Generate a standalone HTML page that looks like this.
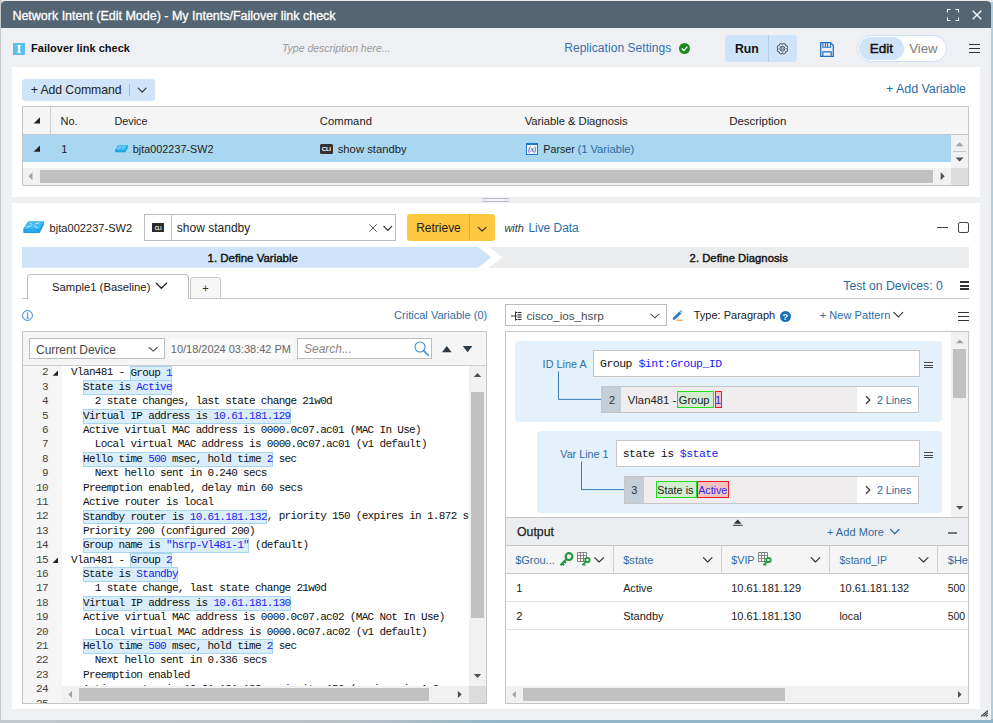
<!DOCTYPE html>
<html>
<head>
<meta charset="utf-8">
<title>Network Intent</title>
<style>
*{box-sizing:border-box;margin:0;padding:0}
html,body{width:993px;height:723px;overflow:hidden}
body{font-family:"Liberation Sans",sans-serif;font-size:12px;color:#222;background:#a9cfe1;position:relative}
.a{position:absolute}
.t{position:absolute;white-space:nowrap;line-height:14px;height:14px}
.b{color:#2e6da4}
.mono{font-family:"Liberation Mono",monospace}
svg{position:absolute;overflow:visible}
#bgtop{position:absolute;left:0;top:0;width:993px;height:2px;background:#e9ebee}
#bgleft{position:absolute;left:0;top:0;width:2px;height:723px;background:#c4c8cb}
#win{position:absolute;left:1px;top:1px;width:990px;height:719px;background:#eff0f4;border-radius:4px 4px 0 0;overflow:hidden}
#title{position:absolute;left:0;top:0;width:990px;height:27px;background:#546673}
.panel{position:absolute;background:#fff}
</style>
</head>
<body>
<div id="bgtop"></div><div id="bgleft"></div>
<div class="a" style="left:0;top:719px;width:993px;height:4px;background:linear-gradient(90deg,#c3c8cc 0%,#b9c1c6 35%,#93b6c7 50%,#8fb5c8 100%)"></div>
<div id="win"><div class="a" style="left:-1px;top:-1px;width:993px;height:723px">
<div class="a" style="left:1px;top:1px;width:990px;height:27px;background:#546673;border-radius:4px 4px 0 0"></div><div class="t" style="left:12.40px;top:8.70px;font-size:12.5px;color:#fff;letter-spacing:-0.009px;-webkit-text-stroke:0.3px #fff;">Network Intent (Edit Mode) - My Intents/Failover link check</div><svg style="left:947px;top:9px" width="12" height="12" viewBox="0 0 12 12"><path d="M0.5 3.5V0.5H3.5 M8.5 0.5H11.5V3.5 M11.5 8.5V11.5H8.5 M3.5 11.5H0.5V8.5" fill="none" stroke="#fff" stroke-width="1.1"/></svg><svg style="left:972px;top:10px" width="10" height="10" viewBox="0 0 10 10"><path d="M0.7 0.7L9.3 9.3M9.3 0.7L0.7 9.3" fill="none" stroke="#fff" stroke-width="1.3"/></svg><div class="a" style="left:13px;top:42.7px;width:12px;height:12.1px;background:#5bc0f0"></div><div class="t" style="left:13px;top:41.6px;width:12px;text-align:center;font-family:'Liberation Serif',serif;font-weight:bold;font-size:12.5px;color:#fff">I</div><div class="t" style="left:31.00px;top:41.00px;font-size:11px;color:#111;letter-spacing:0.030px;font-weight:bold;">Failover link check</div><div class="t" style="left:282.00px;top:41.00px;font-size:10.5px;color:#999;letter-spacing:-0.019px;font-style:italic;">Type description here...</div><div class="t" style="left:564.20px;top:41.40px;font-size:12px;color:#3572ad;letter-spacing:0.052px;">Replication Settings</div><svg style="left:679px;top:43px" width="11" height="11" viewBox="0 0 11 11"><circle cx="5.5" cy="5.5" r="5.5" fill="#1e8a1e"/><path d="M2.8 5.6L4.8 7.6L8.3 3.8" fill="none" stroke="#fff" stroke-width="1.4"/></svg><div class="a" style="left:725px;top:35.3px;width:71.6px;height:26.4px;background:#cfe4f8;border-radius:3px"></div><div class="a" style="left:767.5px;top:35.3px;width:1px;height:26.4px;background:#b4cbe2"></div><div class="t" style="left:735.00px;top:41.80px;font-size:12.25px;color:#111;letter-spacing:-0.071px;font-weight:bold;">Run</div><svg style="left:0;top:0" width="1" height="1"><circle cx="785.86" cy="50.14" r="1.75" fill="#cfe4f8" stroke="#4a4a4a" stroke-width="0.9"/><circle cx="783.84" cy="52.16" r="1.75" fill="#cfe4f8" stroke="#4a4a4a" stroke-width="0.9"/><circle cx="780.96" cy="52.16" r="1.75" fill="#cfe4f8" stroke="#4a4a4a" stroke-width="0.9"/><circle cx="778.94" cy="50.14" r="1.75" fill="#cfe4f8" stroke="#4a4a4a" stroke-width="0.9"/><circle cx="778.94" cy="47.26" r="1.75" fill="#cfe4f8" stroke="#4a4a4a" stroke-width="0.9"/><circle cx="780.96" cy="45.24" r="1.75" fill="#cfe4f8" stroke="#4a4a4a" stroke-width="0.9"/><circle cx="783.84" cy="45.24" r="1.75" fill="#cfe4f8" stroke="#4a4a4a" stroke-width="0.9"/><circle cx="785.86" cy="47.26" r="1.75" fill="#cfe4f8" stroke="#4a4a4a" stroke-width="0.9"/><circle cx="782.40" cy="48.70" r="3.9" fill="#cfe4f8"/><circle cx="782.40" cy="48.70" r="2.5" fill="none" stroke="#4a4a4a" stroke-width="0.9"/><rect x="781.50" y="47.80" width="1.8" height="1.8" fill="none" stroke="#4a4a4a" stroke-width="0.6"/></svg><svg style="left:820px;top:42px" width="14" height="15" viewBox="0 0 14 15"><path d="M0.7 0.7H10.6L13.3 3.4V14.3H0.7Z" fill="none" stroke="#1f72c4" stroke-width="1.3"/><path d="M2.9 0.7V5.2H10.6V0.7M5.4 0.7V5.2M7.6 0.7V5.2" fill="none" stroke="#1f72c4" stroke-width="1.1"/><path d="M2.9 14.3V9.8H11.2V14.3" fill="none" stroke="#1f72c4" stroke-width="1.2"/></svg><div class="a" style="left:857.3px;top:35px;width:89.7px;height:26.5px;background:#fff;border:1px solid #c9e0f6;border-radius:13.5px"></div><div class="a" style="left:858.8px;top:36.5px;width:45px;height:23.5px;background:#cfe4f8;border-radius:12px"></div><div class="t" style="left:869.70px;top:42.00px;font-size:13.5px;color:#111;letter-spacing:-0.016px;-webkit-text-stroke:0.45px #111;">Edit</div><div class="t" style="left:909.20px;top:42.00px;font-size:13.25px;color:#7d7d7d;">View</div><div class="a" style="left:969px;top:44.2px;width:11.3px;height:1.1px;background:#333"></div><div class="a" style="left:969px;top:48.2px;width:11.3px;height:1.1px;background:#333"></div><div class="a" style="left:969px;top:52.2px;width:11.3px;height:1.1px;background:#333"></div><div class="a" style="left:12px;top:67px;width:968px;height:130px;background:#fff"></div><div class="a" style="left:22px;top:79px;width:133px;height:22px;background:#cfe4f8;border-radius:3px"></div><div class="t" style="left:30.70px;top:83.00px;font-size:12.25px;color:#222;letter-spacing:-0.069px;">+ Add Command</div><div class="a" style="left:129.3px;top:84px;width:1px;height:12px;background:#a9bed6"></div><svg style="left:0;top:0" width="1" height="1"><polyline points="138.3,88.2 142.2,92.2 146.0,88.2" fill="none" stroke="#333" stroke-width="1.2" stroke-linecap="round" stroke-linejoin="round"/></svg><div class="t" style="left:886.00px;top:82.00px;font-size:12.5px;color:#2e6da4;letter-spacing:-0.052px;">+ Add Variable</div><div class="a" style="left:22px;top:106px;width:947px;height:80px;background:#fff;border:1px solid #c6c6c6"></div><div class="a" style="left:23px;top:107px;width:945px;height:27px;background:#f5f5f5"></div><div class="a" style="left:23px;top:134px;width:945px;height:1px;background:#c6c6c6"></div><div class="a" style="left:50px;top:107px;width:1px;height:27px;background:#d0d0d0"></div><div class="t" style="left:60.50px;top:114.40px;font-size:11px;color:#222;letter-spacing:-0.008px;">No.</div><div class="t" style="left:114.60px;top:114.40px;font-size:10.75px;color:#222;letter-spacing:-0.010px;">Device</div><div class="t" style="left:319.80px;top:114.40px;font-size:11.25px;color:#222;letter-spacing:0.042px;">Command</div><div class="t" style="left:524.70px;top:114.40px;font-size:11.25px;color:#222;letter-spacing:-0.030px;">Variable &amp; Diagnosis</div><div class="t" style="left:729.20px;top:114.40px;font-size:11.5px;color:#222;letter-spacing:-0.039px;">Description</div><div class="a" style="left:23px;top:135px;width:928px;height:27px;background:#a9d6f0"></div><svg style="left:0;top:0" width="1" height="1"><polygon points="40,117.2 40,123.6 33.6,123.6" fill="#222"/><polygon points="40,145.4 40,151.8 33.6,151.8" fill="#222"/></svg><div class="t" style="left:61.20px;top:142.00px;font-size:11px;color:#222;">1</div><svg style="left:114.6px;top:144.8px" width="13.3" height="7.4" viewBox="0 0 21.4 13.4" preserveAspectRatio="none"><path d="M5.2 0.6 L20.9 0.6 L20.9 4.2 L16.9 12.6 Q16.6 13.2 15.8 13.2 L0.9 13.1 Q0.3 13.1 0.3 12.4 L0.3 8.9 Z" fill="#1b9ce2"/><path d="M5.2 0.6 L20.9 0.6 L16.5 8.9 L0.3 8.9 Z" fill="#41b8f3"/><path d="M3 10.6 H14.5" stroke="#2cc0ff" stroke-width="2" opacity="0.7"/><path d="M7 2 L9.2 3.8 M12.2 3.1 L16 2.2 M4 6.6 L8 5.2 M11.6 5.4 L14.2 7.4" stroke="#e8f6ff" stroke-width="1" stroke-linecap="round" fill="none" opacity="0.85"/></svg><div class="t" style="left:132.70px;top:142.00px;font-size:10.75px;color:#222;letter-spacing:0.058px;">bjta002237-SW2</div><div class="a" style="left:320px;top:143.6px;width:12.6px;height:10px;background:#333;border-radius:1.5px"></div><div class="t" style="left:320px;top:143.6px;width:12.6px;height:10px;line-height:11.6px;text-align:center;font-size:6px;font-weight:bold;color:#fff;letter-spacing:-0.2px">CLI</div><div class="t" style="left:337.70px;top:142.00px;font-size:11.25px;color:#222;letter-spacing:0.017px;">show standby</div><div class="a" style="left:526px;top:143px;width:12px;height:12px;background:#fff;border:1px solid #1f78cc;border-top:2px solid #1f78cc"></div><div class="t" style="left:526px;top:142.6px;width:12px;text-align:center;font-size:8px;font-weight:bold;font-style:italic;font-family:'Liberation Serif',serif;color:#1f78cc;line-height:14px;letter-spacing:-0.3px">(x)</div><div class="t" style="left:543.30px;top:142.00px;font-size:10.75px;color:#222;letter-spacing:-0.029px;">Parser</div><div class="t" style="left:577.50px;top:142.00px;font-size:11.25px;color:#2e6da4;letter-spacing:-0.044px;">(1 Variable)</div><div class="a" style="left:951px;top:135px;width:17px;height:33px;background:#f1f1f1"></div><svg style="left:0;top:0" width="1" height="1"><polygon points="955.6,146.2 963.6,146.2 959.6,142.2" fill="#a3a3a3"/></svg><div class="a" style="left:953px;top:151px;width:13px;height:1px;background:#c8c8c8"></div><svg style="left:0;top:0" width="1" height="1"><polygon points="955.6,157.5 963.6,157.5 959.6,161.5" fill="#505050"/></svg><div class="a" style="left:23px;top:168px;width:928px;height:17px;background:#f1f1f1"></div><div class="a" style="left:951px;top:168px;width:17px;height:17px;background:#dcdcdc"></div><svg style="left:0;top:0" width="1" height="1"><polygon points="32.5,172.3 32.5,180.3 28.5,176.3" fill="#a3a3a3"/></svg><div class="a" style="left:40.3px;top:170.4px;width:892.4px;height:12.6px;background:#c1c1c1"></div><svg style="left:0;top:0" width="1" height="1"><polygon points="940.7,172.3 940.7,180.3 944.7,176.3" fill="#505050"/></svg><div class="a" style="left:482px;top:198px;width:27px;height:1px;background:#b9bcc2"></div><div class="a" style="left:482px;top:201px;width:27px;height:1px;background:#b9bcc2"></div>
<div class="a" style="left:12px;top:203px;width:968px;height:505.5px;background:#fff"></div><svg style="left:23px;top:221.2px" width="21.4" height="12.2" viewBox="0 0 21.4 13.4" preserveAspectRatio="none"><path d="M5.2 0.6 L20.9 0.6 L20.9 4.2 L16.9 12.6 Q16.6 13.2 15.8 13.2 L0.9 13.1 Q0.3 13.1 0.3 12.4 L0.3 8.9 Z" fill="#1b9ce2"/><path d="M5.2 0.6 L20.9 0.6 L16.5 8.9 L0.3 8.9 Z" fill="#41b8f3"/><path d="M3 10.6 H14.5" stroke="#2cc0ff" stroke-width="2" opacity="0.7"/><path d="M7 2 L9.2 3.8 M12.2 3.1 L16 2.2 M4 6.6 L8 5.2 M11.6 5.4 L14.2 7.4" stroke="#e8f6ff" stroke-width="1" stroke-linecap="round" fill="none" opacity="0.85"/></svg><div class="t" style="left:49.60px;top:221.20px;font-size:11px;color:#222;letter-spacing:0.046px;">bjta002237-SW2</div><div class="a" style="left:144px;top:214px;width:252px;height:27px;background:#fff;border:1px solid #bdbdbd"></div><div class="a" style="left:171px;top:215px;width:1px;height:25px;background:#c8c8c8"></div><div class="a" style="left:152.4px;top:222.6px;width:11.4px;height:9.8px;background:#2b2b2b;border-radius:0.5px"></div><div class="t" style="left:152.4px;top:222.6px;width:11.4px;height:9.8px;line-height:11.4px;text-align:center;font-size:4.5px;font-weight:bold;color:#fff;letter-spacing:-0.2px">CLI</div><div class="t" style="left:176.80px;top:221.00px;font-size:12px;color:#222;letter-spacing:0.009px;">show standby</div><svg style="left:369.2px;top:223.7px" width="8" height="8" viewBox="0 0 8 8"><path d="M0.3 0.3L7.7 7.7M7.7 0.3L0.3 7.7" stroke="#555" stroke-width="1" fill="none"/></svg><svg style="left:0;top:0" width="1" height="1"><polyline points="383.8,226.4 387.8,230.4 391.7,226.4" fill="none" stroke="#333" stroke-width="1.25" stroke-linecap="round" stroke-linejoin="round"/></svg><div class="a" style="left:407.4px;top:214.4px;width:87.6px;height:26.4px;background:#fdc73f;border-radius:3px"></div><div class="a" style="left:469.2px;top:214.4px;width:1px;height:26.4px;background:#e3aa35"></div><div class="t" style="left:416.20px;top:221.00px;font-size:12px;color:#222;letter-spacing:-0.011px;">Retrieve</div><svg style="left:0;top:0" width="1" height="1"><polyline points="478.3,227.4 482.1,231.0 486.0,227.4" fill="none" stroke="#3a3020" stroke-width="1.2" stroke-linecap="round" stroke-linejoin="round"/></svg><div class="t" style="left:504.40px;top:221.00px;font-size:11px;color:#333;letter-spacing:0.009px;font-style:italic;">with</div><div class="t" style="left:528.40px;top:221.00px;font-size:12px;color:#2e6da4;letter-spacing:-0.045px;">Live Data</div><div class="a" style="left:937px;top:226.7px;width:11.3px;height:1.1px;background:#444"></div><div class="a" style="left:958px;top:222.2px;width:11px;height:11px;border:1.1px solid #444;border-radius:2px"></div><svg style="left:0;top:0" width="1" height="1"><polygon points="488.6,247 969,247 969,267.7 488.6,267.7 502.7,257.25" fill="#ebecee"/><polygon points="22,247 478,247 491.3,257.25 478,267.7 22,267.7" fill="#cfe4f8"/></svg><div class="t" style="left:207.50px;top:251.00px;font-size:11.5px;color:#111;letter-spacing:-0.009px;-webkit-text-stroke:0.4px #111;">1. Define Variable</div><div class="t" style="left:689.60px;top:251.00px;font-size:11.25px;color:#111;letter-spacing:0.034px;-webkit-text-stroke:0.4px #111;">2. Define Diagnosis</div><div class="a" style="left:22px;top:298.2px;width:947px;height:1px;background:#c6c6c6"></div><div class="a" style="left:190px;top:277px;width:31px;height:22px;background:#f7f7f7;border:1px solid #c6c6c6;border-radius:3px 3px 0 0"></div><div class="a" style="left:27.2px;top:274.3px;width:161.8px;height:25.1px;background:#fff;border:1px solid #bdbdbd;border-bottom:none;border-radius:4px 4px 0 0"></div><div class="t" style="left:52.00px;top:280.20px;font-size:11.25px;color:#222;letter-spacing:0.012px;">Sample1 (Baseline)</div><svg style="left:0;top:0" width="1" height="1"><polyline points="156.3,283.2 161.4,288.4 166.5,283.2" fill="none" stroke="#222" stroke-width="1.3" stroke-linecap="round" stroke-linejoin="round"/></svg><div class="t" style="left:202.30px;top:281.00px;font-size:11px;color:#333;">+</div><div class="t" style="left:843.30px;top:279.00px;font-size:12.25px;color:#2e6da4;letter-spacing:-0.039px;">Test on Devices: 0</div><div class="a" style="left:960px;top:281px;width:9px;height:2px;background:#333"></div><div class="a" style="left:960px;top:284.6px;width:9px;height:2px;background:#333"></div><div class="a" style="left:960px;top:288.2px;width:9px;height:2px;background:#333"></div>
<svg style="left:21.8px;top:309.7px" width="11" height="11" viewBox="0 0 11 11"><circle cx="5.5" cy="5.5" r="4.9" fill="none" stroke="#2a7fc9" stroke-width="1"/><path d="M4.5 4.6H5.7V8M4.3 8.1H7" stroke="#2a7fc9" stroke-width="0.9" fill="none"/><circle cx="5.5" cy="3" r="0.7" fill="#2a7fc9"/></svg><div class="t" style="left:394.00px;top:308.00px;font-size:11px;color:#2e6da4;letter-spacing:0.028px;">Critical Variable (0)</div><div class="a" style="left:22px;top:331px;width:465px;height:373px;background:#fff;border:1px solid #c6c6c6"></div><div class="a" style="left:23px;top:332px;width:463px;height:33px;background:#f5f5f5"></div><div class="a" style="left:23px;top:365px;width:463px;height:1px;background:#cfcfcf"></div><div class="a" style="left:29px;top:338px;width:136px;height:21px;background:#fff;border:1px solid #bdbdbd"></div><div class="t" style="left:36.00px;top:342.60px;font-size:12px;color:#484848;letter-spacing:-0.009px;">Current Device</div><svg style="left:0;top:0" width="1" height="1"><polyline points="149.2,347.5 153.2,351.2 157.2,347.5" fill="none" stroke="#555" stroke-width="1.1" stroke-linecap="round" stroke-linejoin="round"/></svg><div class="a" style="left:169px;top:339px;width:123.5px;height:19.5px;background:#fafafa"></div><div class="t" style="left:170.80px;top:341.60px;font-size:11px;color:#666;letter-spacing:-0.013px;">10/18/2024 03:38:42 PM</div><div class="a" style="left:297px;top:338px;width:135px;height:21px;background:#fff;border:1px solid #bdbdbd"></div><div class="t" style="left:304.00px;top:342.40px;font-size:12px;color:#888;font-style:italic;">Search...</div><svg style="left:413.5px;top:340.5px" width="16" height="16" viewBox="0 0 16 16"><circle cx="6" cy="6" r="5" fill="none" stroke="#3d8bd0" stroke-width="1.1"/><path d="M9.6 9.6L14.8 14.8" stroke="#3d8bd0" stroke-width="1.5" fill="none"/></svg><svg style="left:0;top:0" width="1" height="1"><polygon points="442,352.2 451.6,352.2 446.8,346" fill="#2d3944"/><polygon points="462.8,346 472.4,346 467.6,352.2" fill="#2d3944"/></svg><style>.code{position:absolute;left:23px;top:366px;width:446px;height:337px;overflow:hidden;background:#fff}.gut{position:absolute;left:0;top:0;width:38.7px;height:337px;background:#f5f5f5}.ln{position:absolute;margin-top:0px;left:0;width:24.9px;text-align:right;font-family:"Liberation Mono",monospace;font-size:11px;letter-spacing:-0.67px;color:#444;height:14.4px;line-height:14.4px}.cl{position:absolute;margin-top:0px;left:48.1px;white-space:pre;font-family:"Liberation Mono",monospace;font-size:11px;letter-spacing:-0.671px;color:#111;height:14.4px;line-height:14.4px}.hl{background:#d9eefa;padding:0.9px 0 2.1px 0;box-shadow:inset 0 0 0 1px #a8d6ef;}.v{color:#1c1cf0}</style><div class="code"><div class="gut"></div><div class="ln" style="top:-0.60px">2</div><svg style="left:-23px;top:-366px" width="1" height="1"><polygon points="58,370.4 58,375.8 52.6,375.8" fill="#222"/></svg><div class="cl" style="top:-0.60px">Vlan481 - <span class="hl">Group <span class="v">1</span></span></div><div class="ln" style="top:13.80px">3</div><div class="cl" style="top:13.80px">  <span class="hl">State is <span class="v">Active</span></span></div><div class="ln" style="top:28.20px">4</div><div class="cl" style="top:28.20px">    2 state changes, last state change 21w0d</div><div class="ln" style="top:42.60px">5</div><div class="cl" style="top:42.60px">  <span class="hl">Virtual IP address is <span class="v">10.61.181.129</span></span></div><div class="ln" style="top:57.00px">6</div><div class="cl" style="top:57.00px">  Active virtual MAC address is 0000.0c07.ac01 (MAC In Use)</div><div class="ln" style="top:71.40px">7</div><div class="cl" style="top:71.40px">    Local virtual MAC address is 0000.0c07.ac01 (v1 default)</div><div class="ln" style="top:85.80px">8</div><div class="cl" style="top:85.80px">  <span class="hl">Hello time <span class="v">500</span> msec, hold time <span class="v">2</span></span> sec</div><div class="ln" style="top:100.20px">9</div><div class="cl" style="top:100.20px">    Next hello sent in 0.240 secs</div><div class="ln" style="top:114.60px">10</div><div class="cl" style="top:114.60px">  Preemption enabled, delay min 60 secs</div><div class="ln" style="top:129.00px">11</div><div class="cl" style="top:129.00px">  Active router is local</div><div class="ln" style="top:143.40px">12</div><div class="cl" style="top:143.40px">  <span class="hl">Standby router is <span class="v">10.61.181.132</span></span>, priority 150 (expires in 1.872 s</div><div class="ln" style="top:157.80px">13</div><div class="cl" style="top:157.80px">  Priority 200 (configured 200)</div><div class="ln" style="top:172.20px">14</div><div class="cl" style="top:172.20px">  <span class="hl">Group name is <span class="v">"hsrp-Vl481-1"</span></span> (default)</div><div class="ln" style="top:186.60px">15</div><svg style="left:-23px;top:-366px" width="1" height="1"><polygon points="58,557.6 58,563.0 52.6,563.0" fill="#222"/></svg><div class="cl" style="top:186.60px">Vlan481 - <span class="hl">Group <span class="v">2</span></span></div><div class="ln" style="top:201.00px">16</div><div class="cl" style="top:201.00px">  <span class="hl">State is <span class="v">Standby</span></span></div><div class="ln" style="top:215.40px">17</div><div class="cl" style="top:215.40px">    1 state change, last state change 21w0d</div><div class="ln" style="top:229.80px">18</div><div class="cl" style="top:229.80px">  <span class="hl">Virtual IP address is <span class="v">10.61.181.130</span></span></div><div class="ln" style="top:244.20px">19</div><div class="cl" style="top:244.20px">  Active virtual MAC address is 0000.0c07.ac02 (MAC Not In Use)</div><div class="ln" style="top:258.60px">20</div><div class="cl" style="top:258.60px">    Local virtual MAC address is 0000.0c07.ac02 (v1 default)</div><div class="ln" style="top:273.00px">21</div><div class="cl" style="top:273.00px">  <span class="hl">Hello time <span class="v">500</span> msec, hold time <span class="v">2</span></span> sec</div><div class="ln" style="top:287.40px">22</div><div class="cl" style="top:287.40px">    Next hello sent in 0.336 secs</div><div class="ln" style="top:301.80px">23</div><div class="cl" style="top:301.80px">  Preemption enabled</div><div class="ln" style="top:316.20px">24</div><div class="cl" style="top:316.20px">  Active router is 10.61.181.132, priority 150 (expires in 1.9</div><div class="ln" style="top:330.60px">25</div><div class="cl" style="top:330.60px">  Priority 150 (default 100)</div></div><div class="a" style="left:469px;top:366px;width:17px;height:320px;background:#f1f1f1"></div><svg style="left:0;top:0" width="1" height="1"><polygon points="473.8,376.9 481.2,376.9 477.5,373.1" fill="#505050"/></svg><div class="a" style="left:471.2px;top:392px;width:12.6px;height:226px;background:#c1c1c1"></div><svg style="left:0;top:0" width="1" height="1"><polygon points="473.8,674.1 481.2,674.1 477.5,677.9" fill="#505050"/></svg><div class="a" style="left:62px;top:686px;width:407px;height:17px;background:#f1f1f1"></div><div class="a" style="left:469px;top:686px;width:17px;height:17px;background:#dcdcdc"></div><svg style="left:0;top:0" width="1" height="1"><polygon points="72.0,690.7 72.0,698.1 68.4,694.4" fill="#a3a3a3"/></svg><div class="a" style="left:79.3px;top:688px;width:350.2px;height:12.8px;background:#c1c1c1"></div><svg style="left:0;top:0" width="1" height="1"><polygon points="457.9,690.7 457.9,698.1 461.7,694.4" fill="#505050"/></svg>
<div class="a" style="left:505px;top:304px;width:162px;height:22px;background:#fff;border:1px solid #bdbdbd"></div><svg style="left:511.2px;top:311.4px" width="11" height="10" viewBox="0 0 11 10"><path d="M0 5H4.5M4.5 0.5V9.5M4.5 1.5H6M4.5 5H6M4.5 8.5H6" stroke="#333" stroke-width="1" fill="none"/><path d="M6.5 1.5H10.5M6.5 3.8H10.5M6.5 6.2H10.5M6.5 8.5H10.5" stroke="#333" stroke-width="1.2" fill="none"/></svg><div class="t" style="left:526.50px;top:308.80px;font-size:11.75px;color:#4c4c4c;letter-spacing:-0.030px;">cisco_ios_hsrp</div><svg style="left:0;top:0" width="1" height="1"><polyline points="650.9,314.1 654.9,317.9 658.9,314.1" fill="none" stroke="#555" stroke-width="1.1" stroke-linecap="round" stroke-linejoin="round"/></svg><svg style="left:671.5px;top:309.5px" width="11" height="11" viewBox="0 0 11 11"><path d="M1.2 7.6L7.3 1.5L9.3 3.5L3.2 9.6L0.8 10Z" fill="#2a7fc9"/><path d="M7.9 0.9L8.6 0.3L10.4 2.1L9.8 2.8Z" fill="#2a7fc9"/><path d="M4.5 10.3H10.5" stroke="#f0a030" stroke-width="1.2"/></svg><div class="t" style="left:693.70px;top:308.40px;font-size:11px;color:#222;letter-spacing:0.010px;">Type: Paragraph</div><svg style="left:779.8px;top:310.9px" width="11" height="11" viewBox="0 0 11 11"><circle cx="5.5" cy="5.5" r="5.5" fill="#1a6fb5"/></svg><div class="t" style="left:779.8px;top:309.6px;width:11px;text-align:center;font-size:9px;font-weight:bold;color:#fff">?</div><div class="t" style="left:819.80px;top:308.20px;font-size:11px;color:#2e6da4;letter-spacing:0.045px;">+ New Pattern</div><svg style="left:0;top:0" width="1" height="1"><polyline points="893.8,312.3 898.3,316.9 902.8,312.3" fill="none" stroke="#333" stroke-width="1.1" stroke-linecap="round" stroke-linejoin="round"/></svg><div class="a" style="left:958.4px;top:312.2px;width:10.6px;height:1.1px;background:#333"></div><div class="a" style="left:958.4px;top:316.2px;width:10.6px;height:1.1px;background:#333"></div><div class="a" style="left:958.4px;top:320.2px;width:10.6px;height:1.1px;background:#333"></div><div class="a" style="left:505px;top:331px;width:464px;height:187px;background:#fff;border:1px solid #c6c6c6"></div><div class="a" style="left:506px;top:332.5px;width:445.6px;height:185px;overflow:hidden"><div class="a" style="left:9px;top:8.5px;width:427px;height:81px;background:#e4f1fa;border-radius:4px"></div><div class="a" style="left:31px;top:98.5px;width:405px;height:81.6px;background:#e4f1fa;border-radius:4px"></div></div><svg style="left:0;top:0" width="1" height="1"><path d="M558.5 371.5V399.4H601.5" fill="none" stroke="#3a7cba" stroke-width="1"/><path d="M581.5 461.5V489.6H624.5" fill="none" stroke="#3a7cba" stroke-width="1"/></svg><div class="t" style="left:542.60px;top:357.00px;font-size:10.75px;color:#2e6da4;letter-spacing:0.053px;">ID Line A</div><div class="a" style="left:593px;top:350px;width:327px;height:27px;background:#fff;border:1px solid #c6c6c6"></div><div class="t mono" style="left:600px;top:357.2px;font-size:11.5px;letter-spacing:-0.5px;color:#111">Group <span style="color:#1c1cf0">$int:Group_ID</span></div><div class="a" style="left:924px;top:362.2px;width:9.2px;height:1.1px;background:#444"></div><div class="a" style="left:924px;top:364.7px;width:9.2px;height:1.1px;background:#444"></div><div class="a" style="left:924px;top:367.2px;width:9.2px;height:1.1px;background:#444"></div><div class="a" style="left:601px;top:386px;width:318px;height:27px;background:#efedee;border:1px solid #c6c6c6"></div><div class="a" style="left:602px;top:387px;width:19px;height:25px;background:#c4ced6"></div><div class="t" style="left:609.00px;top:392.80px;font-size:11px;color:#333;">2</div><div class="a" style="left:856.9px;top:387px;width:61.1px;height:25px;background:#fff"></div><div class="a" style="left:677.4px;top:391px;width:36.8px;height:17px;background:#d2ecd0;border:1px solid #22dc22"></div><div class="a" style="left:714.7px;top:391px;width:7.2px;height:17px;background:#f3c2c2;border:1px solid #ec1c1c"></div><div class="t" style="left:627.80px;top:392.80px;font-size:11.25px;color:#222;letter-spacing:0.023px;">Vlan481 - </div><div class="t" style="left:678.80px;top:392.80px;font-size:11px;color:#222;letter-spacing:0.024px;">Group</div><div class="t" style="left:714.90px;top:392.80px;font-size:11px;color:#2b2bf0;">1</div><div class="t" style="left:877.00px;top:392.80px;font-size:10.75px;color:#2e6da4;letter-spacing:-0.053px;">2 Lines</div><div class="t" style="left:560.30px;top:447.40px;font-size:10.75px;color:#2e6da4;letter-spacing:-0.012px;">Var Line 1</div><div class="a" style="left:616px;top:440px;width:304px;height:27px;background:#fff;border:1px solid #c6c6c6"></div><div class="t mono" style="left:622.7px;top:447.3px;font-size:11.5px;letter-spacing:-0.55px;color:#111">state is <span style="color:#1c1cf0">$state</span></div><div class="a" style="left:924px;top:452.2px;width:9.2px;height:1.1px;background:#444"></div><div class="a" style="left:924px;top:454.7px;width:9.2px;height:1.1px;background:#444"></div><div class="a" style="left:924px;top:457.2px;width:9.2px;height:1.1px;background:#444"></div><div class="a" style="left:624px;top:476px;width:295px;height:28px;background:#efedee;border:1px solid #c6c6c6"></div><div class="a" style="left:625px;top:477px;width:18.9px;height:26px;background:#c4ced6"></div><div class="t" style="left:631.20px;top:482.80px;font-size:11px;color:#333;">3</div><div class="a" style="left:856.9px;top:477px;width:61.1px;height:26px;background:#fff"></div><div class="a" style="left:656.2px;top:481px;width:41.2px;height:17px;background:#d2ecd0;border:1px solid #22dc22"></div><div class="a" style="left:697px;top:481px;width:32.2px;height:17px;background:#f3c2c2;border:1px solid #ec1c1c"></div><div class="t" style="left:657.30px;top:482.80px;font-size:10.75px;color:#222;letter-spacing:0.043px;">State is</div><div class="t" style="left:698.20px;top:482.80px;font-size:10.75px;color:#2b2bf0;letter-spacing:-0.047px;">Active</div><div class="t" style="left:877.00px;top:482.80px;font-size:10.75px;color:#2e6da4;letter-spacing:-0.053px;">2 Lines</div><svg style="left:0;top:0" width="1" height="1"><polyline points="866,396.3 869.8,400 866,403.7" fill="none" stroke="#333" stroke-width="1.2"/><polyline points="866,486.3 869.8,490 866,493.7" fill="none" stroke="#333" stroke-width="1.2"/></svg><div class="a" style="left:951.3px;top:332px;width:16.7px;height:185px;background:#f1f1f1"></div><svg style="left:0;top:0" width="1" height="1"><polygon points="956.0,343.2 963.6,343.2 959.8,339.4" fill="#a3a3a3"/></svg><div class="a" style="left:953.2px;top:349px;width:12.6px;height:48.8px;background:#c1c1c1"></div><svg style="left:0;top:0" width="1" height="1"><polygon points="956.0,505.9 963.6,505.9 959.8,509.7" fill="#505050"/></svg><div class="a" style="left:505px;top:517px;width:464px;height:187px;background:#fff;border:1px solid #c6c6c6"></div><div class="a" style="left:506px;top:518px;width:462px;height:27px;background:#ecedf0"></div><div class="a" style="left:506px;top:545px;width:462px;height:1px;background:#c6c6c6"></div><div class="t" style="left:517.00px;top:525.20px;font-size:12.25px;color:#222;letter-spacing:0.036px;-webkit-text-stroke:0.25px #222;">Output</div><svg style="left:0;top:0" width="1" height="1"><polygon points="733.8,523.8 741.6,523.8 737.7,519.6" fill="#333"/><rect x="733" y="524.8" width="9.6" height="1" fill="#333"/></svg><div class="t" style="left:826.90px;top:525.20px;font-size:11px;color:#2e6da4;letter-spacing:0.052px;">+ Add More</div><svg style="left:0;top:0" width="1" height="1"><polyline points="890.6,529.4 894.8,533.8 899.0,529.4" fill="none" stroke="#2e6da4" stroke-width="1.3" stroke-linecap="round" stroke-linejoin="round"/></svg><div class="a" style="left:948.3px;top:531.8px;width:8.8px;height:1.8px;background:#757575"></div><div class="a" style="left:506px;top:546px;width:462px;height:27.5px;background:#f5f5f5"></div><div class="a" style="left:506px;top:573px;width:462px;height:1px;background:#c6c6c6"></div><div class="a" style="left:612.9px;top:546px;width:1px;height:27.5px;background:#d0d0d0"></div><div class="a" style="left:721.2px;top:546px;width:1px;height:27.5px;background:#d0d0d0"></div><div class="a" style="left:828.9px;top:546px;width:1px;height:27.5px;background:#d0d0d0"></div><div class="a" style="left:936.5px;top:546px;width:1px;height:27.5px;background:#d0d0d0"></div><div class="t" style="left:515.20px;top:553.00px;font-size:11px;color:#2e6da4;letter-spacing:-0.031px;">$Grou...</div><div class="t" style="left:623.20px;top:553.00px;font-size:11px;color:#2e6da4;letter-spacing:0.055px;">$state</div><div class="t" style="left:731.30px;top:553.00px;font-size:10.75px;color:#2e6da4;letter-spacing:-0.028px;">$VIP</div><div class="t" style="left:839.50px;top:553.00px;font-size:10.5px;color:#2e6da4;letter-spacing:0.023px;">$stand_IP</div><div class="t" style="left:947.80px;top:553.00px;font-size:11px;color:#2e6da4;width:20.5px;overflow:hidden;">$He</div><svg style="left:559px;top:552.2px" width="15" height="15" viewBox="0 0 15 15"><circle cx="10" cy="4.6" r="3.4" fill="none" stroke="#1d9a3c" stroke-width="2.2"/><path d="M7.6 7L1.5 13.2M3.2 11.4L5 13.2M5.2 9.4L6.8 11" stroke="#1d9a3c" stroke-width="2" fill="none"/></svg><svg style="left:577.4px;top:552.4px" width="14" height="15" viewBox="0 0 14 15"><path d="M0.5 0.5H9.5V9.5H0.5ZM0.5 3.5H9.5M0.5 6.5H9.5M3.5 0.5V9.5M6.5 0.5V9.5" fill="#fff" stroke="#777" stroke-width="0.9"/><circle cx="10.5" cy="8" r="2.2" fill="#fff" stroke="#1d9a3c" stroke-width="1.8"/><path d="M9 9.6L5.5 13.2M6.6 12L8 13.4" stroke="#1d9a3c" stroke-width="1.7" fill="none"/></svg><svg style="left:757.6px;top:552.4px" width="14" height="15" viewBox="0 0 14 15"><path d="M0.5 0.5H9.5V9.5H0.5ZM0.5 3.5H9.5M0.5 6.5H9.5M3.5 0.5V9.5M6.5 0.5V9.5" fill="#fff" stroke="#777" stroke-width="0.9"/><circle cx="10.5" cy="8" r="2.2" fill="#fff" stroke="#1d9a3c" stroke-width="1.8"/><path d="M9 9.6L5.5 13.2M6.6 12L8 13.4" stroke="#1d9a3c" stroke-width="1.7" fill="none"/></svg><svg style="left:0;top:0" width="1" height="1"><polyline points="594.7,557.6 599.2,562.0 603.6,557.6" fill="none" stroke="#333" stroke-width="1.1" stroke-linecap="round" stroke-linejoin="round"/></svg><svg style="left:0;top:0" width="1" height="1"><polyline points="703.4,557.6 707.7,562.0 712.0,557.6" fill="none" stroke="#333" stroke-width="1.1" stroke-linecap="round" stroke-linejoin="round"/></svg><svg style="left:0;top:0" width="1" height="1"><polyline points="811.2,557.6 815.5,562.0 819.8,557.6" fill="none" stroke="#333" stroke-width="1.1" stroke-linecap="round" stroke-linejoin="round"/></svg><svg style="left:0;top:0" width="1" height="1"><polyline points="919.0,557.6 923.5,562.0 928.0,557.6" fill="none" stroke="#333" stroke-width="1.1" stroke-linecap="round" stroke-linejoin="round"/></svg><div class="a" style="left:506px;top:601px;width:462px;height:1px;background:#e4e4e4"></div><div class="a" style="left:506px;top:629px;width:462px;height:1px;background:#e4e4e4"></div><div class="t" style="left:516.20px;top:581.20px;font-size:11px;color:#222;">1</div><div class="t" style="left:623.20px;top:581.20px;font-size:10.75px;color:#222;letter-spacing:-0.014px;">Active</div><div class="t" style="left:731.30px;top:581.20px;font-size:11px;color:#222;letter-spacing:-0.051px;">10.61.181.129</div><div class="t" style="left:839.50px;top:581.20px;font-size:11px;color:#222;letter-spacing:-0.051px;">10.61.181.132</div><div class="t" style="left:947.80px;top:581.20px;font-size:10.5px;color:#222;letter-spacing:-0.110px;">500</div><div class="t" style="left:516.20px;top:609.20px;font-size:11px;color:#222;">2</div><div class="t" style="left:623.20px;top:609.20px;font-size:11px;color:#222;letter-spacing:-0.011px;">Standby</div><div class="t" style="left:731.30px;top:609.20px;font-size:11px;color:#222;letter-spacing:-0.051px;">10.61.181.130</div><div class="t" style="left:839.50px;top:609.20px;font-size:10.75px;color:#222;letter-spacing:-0.022px;">local</div><div class="t" style="left:947.80px;top:609.20px;font-size:10.5px;color:#222;letter-spacing:-0.110px;">500</div><div class="a" style="left:506px;top:686px;width:462px;height:17px;background:#f1f1f1"></div><svg style="left:0;top:0" width="1" height="1"><polygon points="515.8,690.9 515.8,698.1 512.2,694.5" fill="#a3a3a3"/></svg><div class="a" style="left:523.2px;top:688px;width:261.8px;height:12.8px;background:#c1c1c1"></div><svg style="left:0;top:0" width="1" height="1"><polygon points="958.0,690.9 958.0,698.1 961.6,694.5" fill="#505050"/></svg><svg style="left:980.5px;top:709.5px" width="8" height="7" viewBox="0 0 8 7"><path d="M0 6.5L7 0.5M2.5 6.5L7 2.6M5 6.5L7 4.8" stroke="#444" stroke-width="1.1" fill="none"/></svg>
</div>
</div>
</body>
</html>
